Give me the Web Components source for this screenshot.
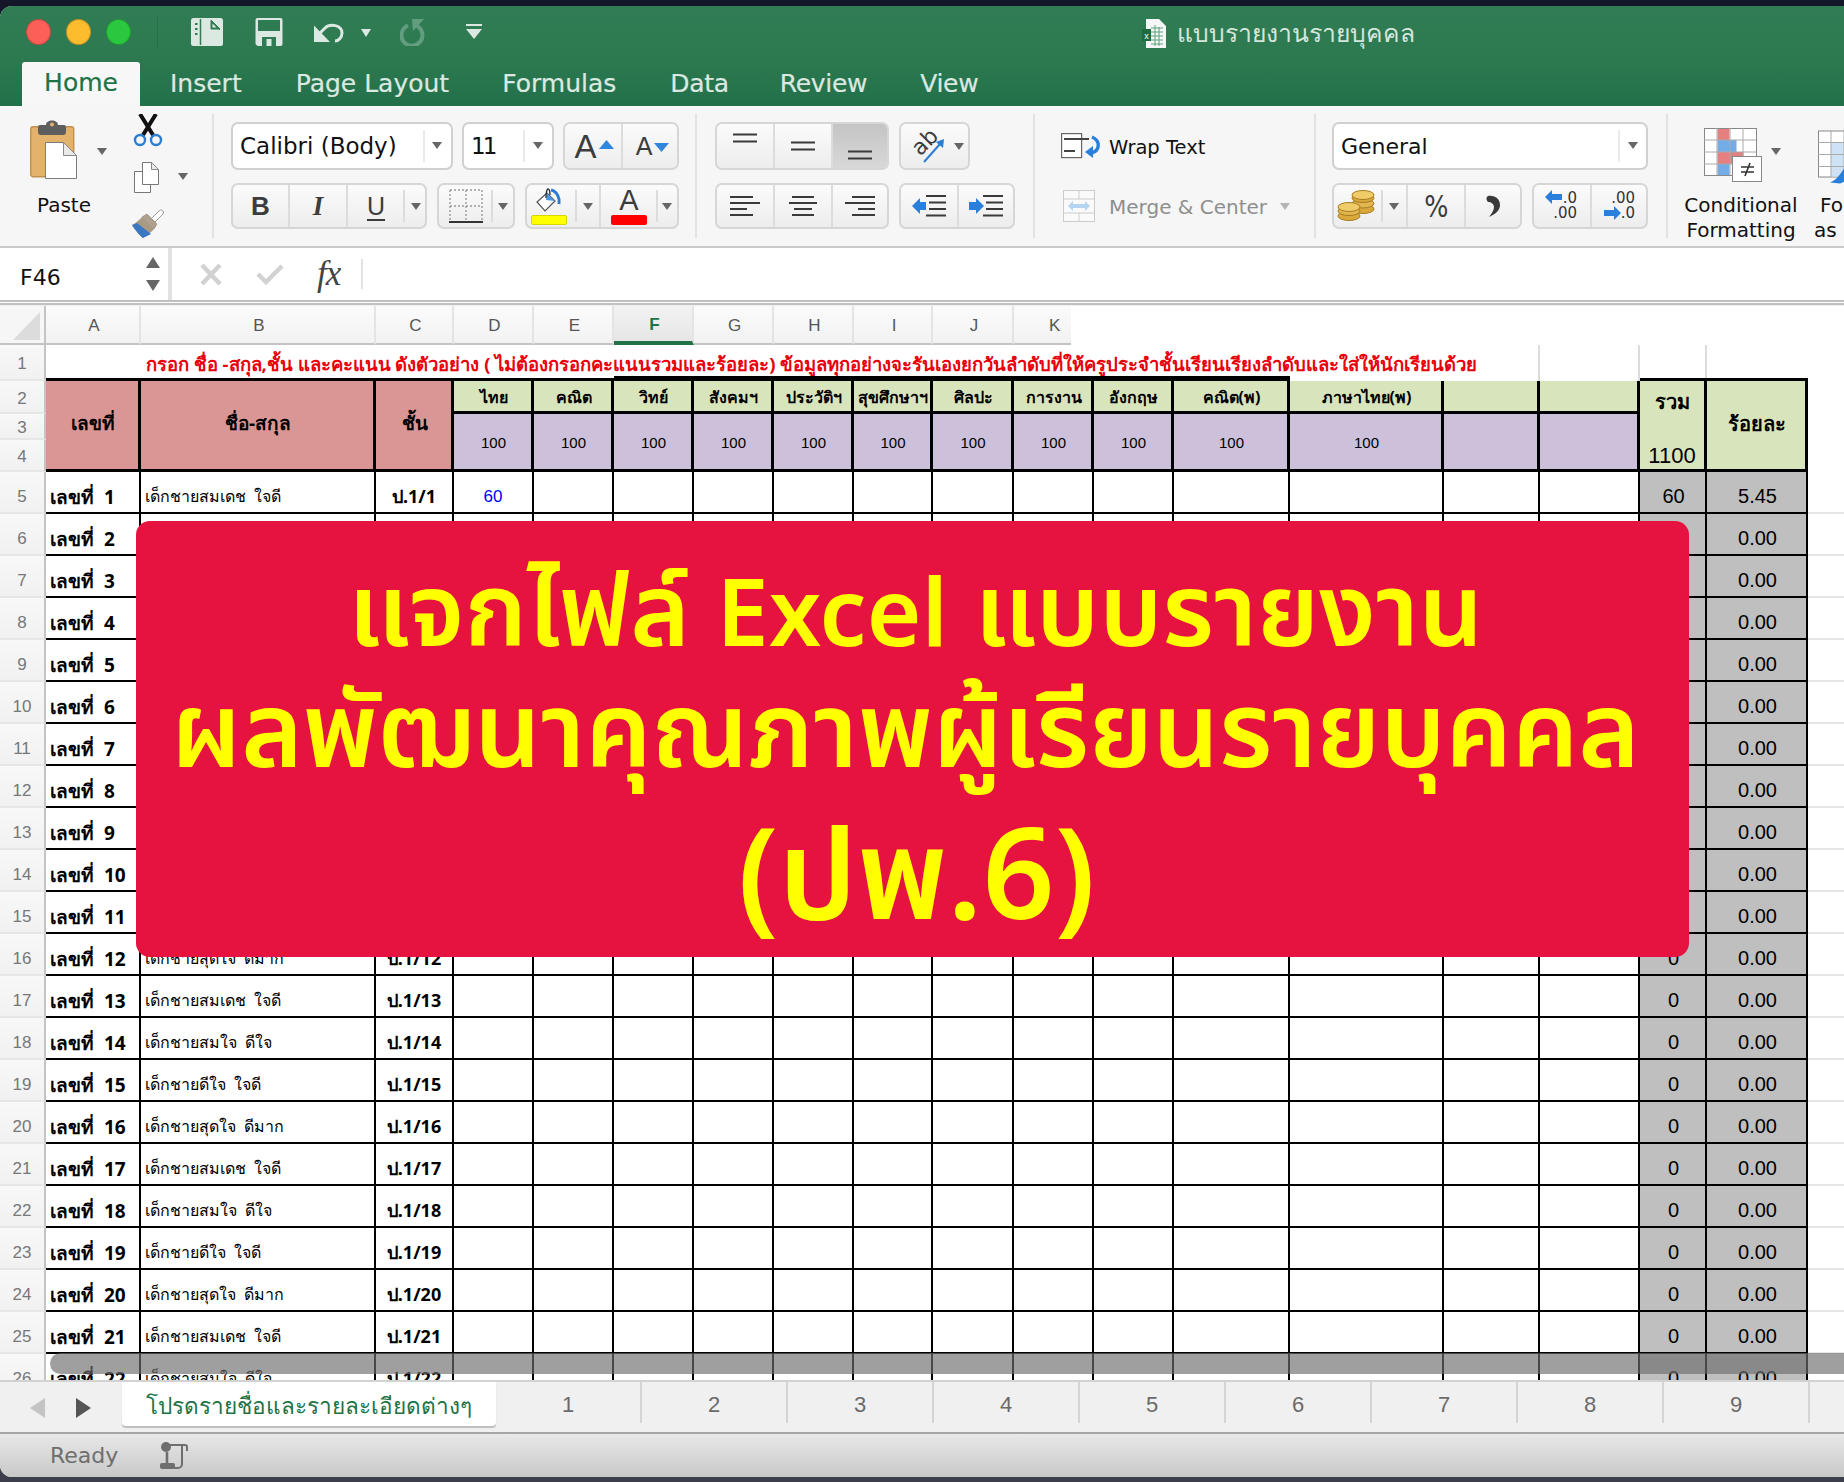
<!DOCTYPE html>
<html lang="th">
<head>
<meta charset="UTF-8" />
<title>แบบรายงานรายบุคคล</title>
<style>
  html, body { margin: 0; padding: 0; background: #14162a; }
  body { width: 1844px; height: 1482px; overflow: hidden; font-family: "DejaVu Sans", sans-serif; }
</style>
</head>
<body>
<xl-app>
  <xl-titlebar></xl-titlebar>
  <xl-tabs></xl-tabs>
  <xl-ribbon></xl-ribbon>
  <xl-formula></xl-formula>
  <xl-sheet></xl-sheet>
  <xl-sheettabs></xl-sheettabs>
  <xl-status></xl-status>
  <xl-banner slot="over">
    <span style="font-size:101.5px;margin-left:6px">แจกไฟล์ <span style="font-size:94px">Excel</span> แบบรายงาน</span>
    <span style="font-size:104.6px;margin:-4px 14px 0 0">ผลพัฒนาคุณภาพผู้เรียนรายบุคคล</span>
    <span style="font-size:126px;line-height:153px;margin:8px 0 0 8px">(ปพ.6)</span>
  </xl-banner>
</xl-app>

<script>
  const THAI = '"Noto Sans", sans-serif';
  const define = (name, css, html) => {
    customElements.define(name, class extends HTMLElement {
      constructor() {
        super();
        this.attachShadow({ mode: "open" }).innerHTML = `<style>${css}</style>${typeof html === "function" ? html() : html}`;
      }
    });
  };

  // Window frame
  define("xl-app", `
    :host { display: flex; flex-direction: column; position: relative; width: 1844px; height: 1482px; overflow: hidden; padding: 6px 0 5px; box-sizing: border-box; background: linear-gradient(#14162a 50%, #3c3e4c 50%); }
    .win { display: flex; flex-direction: column; flex: 1; border-radius: 12px 0 0 12px; overflow: hidden; background: #f0f0f0; }
  `, `<div class="win"><slot></slot></div><slot name="over"></slot>`);

  // Title bar
  const ACTIVE = "#dce9e2";
  define("xl-titlebar", `
    :host { display: flex; align-items: flex-start; height: 56px; box-sizing: border-box; background: linear-gradient(#317c54, #2c7950); color: #dce9e2; }
    .lights { display: flex; gap: 15px; margin: 13px 0 0 26px; }
    .lights i { width: 25px; height: 26px; border-radius: 50%; box-sizing: border-box; border: 1px solid rgba(0,0,0,.22); }
    .sep { width: 1px; height: 32px; margin: 10px 33px 0 26px; background: rgba(0,0,0,.1); }
    svg { display: block; flex: none; }
    .title { display: flex; align-items: center; gap: 10px; position: absolute; left: 1142px; top: 14px; font: 24.7px "Noto Sans", sans-serif; color: #d6e6dd; }
  `, `
    <div class="lights"><i style="background:#fb5f57"></i><i style="background:#fdbb2e"></i><i style="background:#29c83f"></i></div>
    <div class="sep"></div>
    <svg width="32" height="28" viewBox="0 0 32 28" style="margin-top:12px"><rect width="32" height="28" rx="2.5" fill="${ACTIVE}"/><path d="M9.5 1v26" stroke="#2f7b53" stroke-width="1.5"/><path d="M4 6h2.5M4 11h2.5M4 16h2.5" stroke="#2f7b53" stroke-width="2"/><path d="M20 2v9h9zM20 3l9 9" fill="#2f7b53" stroke="#2f7b53" stroke-width="1"/><path d="M21.5 5.5v4h4z" fill="${ACTIVE}"/></svg>
    <svg width="28" height="28" viewBox="0 0 28 28" style="margin:12px 0 0 32px"><path d="M2.5 0h23a2 2 0 0 1 2 2v24a2 2 0 0 1-2 2H2.5l-2-2V2a2 2 0 0 1 2-2z" fill="${ACTIVE}"/><rect x="3" y="2" width="22" height="11" fill="#2f7b53"/><path d="M7 28v-9h14v9z" fill="#2f7b53"/><rect x="11.5" y="21" width="5" height="7" fill="${ACTIVE}"/></svg>
    <svg width="30" height="22" viewBox="0 0 30 22" style="margin:16px 0 0 31px"><path d="M0 3.5V20h16z" fill="${ACTIVE}"/><path d="M5 12l6-6c5-5 17-3 17 5 0 5-4 8-7 8" fill="none" stroke="${ACTIVE}" stroke-width="3"/></svg>
    <svg width="10" height="8" viewBox="0 0 10 8" style="margin:23px 0 0 17px"><path d="M0 0h10L5 8z" fill="${ACTIVE}"/></svg>
    <svg width="25" height="27" viewBox="0 0 25 27" style="margin:13px 0 0 29px"><path d="M8 6.5a10.5 10.5 0 1 0 9 .5" fill="none" stroke="#639d7f" stroke-width="4"/><path d="M12 0h12L13 12z" fill="#639d7f"/></svg>
    <svg width="16" height="15" viewBox="0 0 16 15" style="margin:18px 0 0 41px"><path d="M0 1h16" stroke="${ACTIVE}" stroke-width="2"/><path d="M0 5h16l-8 10z" fill="${ACTIVE}"/></svg>
    <div class="title">
      <svg width="25" height="29" viewBox="0 0 25 29"><path d="M4 0h13l7 7v22H4z" fill="#f4f7f5"/><path d="M9 9h12M9 13h12M9 17h12M9 21h12M9 25h12M13 6v21M17 8v19" stroke="#5fa27e" stroke-width="1"/><rect y="10" width="9" height="12" fill="#1f6b41"/><text x="4.5" y="19.5" font-size="9" text-anchor="middle" fill="#fff" font-family="Liberation Sans">x</text></svg>
      <span>แบบรายงานรายบุคคล</span>
    </div>
  `);

  // Ribbon tab names
  define("xl-tabs", `
    :host { display: flex; align-items: flex-end; gap: 54px; height: 44px; padding-left: 22px; background: linear-gradient(#2c7950, #22704a); font: 25px "DejaVu Sans", sans-serif; color: #dbe9e1; }
    span { height: 42px; line-height: 39px; display: block; white-space: nowrap; -webkit-text-stroke: .2px currentColor; }
    .on { background: #f7f7f7; color: #217346; width: 118px; height: 44px; line-height: 41px; text-align: center; border-radius: 3px 3px 0 0; margin-right: -24px; }
    .tight { letter-spacing: -.3px; }
  `, `<span class="on">Home</span><span>Insert</span><span>Page Layout</span><span style="margin-left:-1px">Formulas</span><span class="tight">Data</span><span class="tight" style="margin-left:-3px">Review</span><span class="tight" style="margin-left:-1px">View</span>`);

  // Ribbon button group and its segments
  define("rb-group", `
    :host { display: inline-flex; align-items: stretch; box-sizing: border-box; height: 46px; border: 2px solid #d6d6d6; border-radius: 7px; background: linear-gradient(#fbfbfb, #ededed); overflow: hidden; flex: none; }
  `, `<slot></slot>`);
  define("rb-seg", `
    :host { display: flex; align-items: center; justify-content: center; box-sizing: border-box; flex: none; position: relative; color: #3c3c3c; }
    :host([line]) { border-right: 2px solid #dcdcdc; }
    :host([on]) { background: linear-gradient(#c4c4c4, #d8d8d8); }
    :host([tick])::before { content: ""; position: absolute; left: -1px; top: 5px; bottom: 5px; width: 2px; background: #dcdcdc; }
  `, `<slot></slot>`);

  const caret = `<i class="c"></i>`;
  const hl = (ys, xs) => ys.map((y, i) => `<path d="M${xs ? xs[i][0] : 0} ${y}H${xs ? xs[i][1] : 24}" stroke="#3a3a3a" stroke-width="2.2"/>`).join("");

  define("xl-ribbon", `
    :host { display: flex; height: 142px; box-sizing: border-box; padding: 8px 0 8px; background: #f6f6f6; border-bottom: 2px solid #cacaca; overflow: hidden; font: 20px "DejaVu Sans", sans-serif; color: #111; }
    section { box-sizing: border-box; height: 124px; padding-top: 8px; border-right: 2px solid #e2e2e2; flex: none; display: flex; flex-direction: column; gap: 13px; }
    .row { display: flex; gap: 10px; align-items: center; height: 46px; flex: none; }
    .row.first { height: 48px; }
    .box { display: flex; align-items: center; box-sizing: border-box; height: 48px; border: 2px solid #d0d0d0; border-radius: 7px; background: #fff; font-size: 23px; position: relative; flex: none; color: #111; }
    .box span { padding-left: 7px; white-space: nowrap; }
    .box::after { content: ""; position: absolute; top: 6px; bottom: 6px; width: 2px; background: #eaeaea; right: var(--dv); }
    .box .c { position: absolute; right: var(--cr); top: 18px; }
    .c { display: block; flex: none; width: 0; height: 0; border: 5px solid transparent; border-top: 7px solid #666; border-bottom: 0; }
    svg { display: block; flex: none; }
    .clip { flex-direction: row; gap: 0; padding: 0; width: 214px; position: relative; }
    .paste { width: 102px; margin-left: 30px; display: flex; flex-direction: column; flex: none; height: 124px; }
    .paste .top { display: flex; padding-top: 6px; height: 60px; }
    .paste .top .c { margin: 28px 0 0 19px; }
    .paste b { font-weight: 400; margin: 13px 0 0 7px; line-height: 24px; color: #111; }
    .tools { display: flex; flex-direction: column; height: 124px; }
    .tools svg { margin-left: 1px; }
    .tools .cp { display: flex; margin: 15px 0 15px; }
    .tools .cp .c { margin: 11px 0 0 17px; }
    .b { font: bold 26px "Liberation Sans", sans-serif; }
    .i { font: italic bold 27px "Liberation Serif", serif; }
    .u { font: 25px "Liberation Sans", sans-serif; text-decoration: underline; text-underline-offset: 4px; text-decoration-thickness: 2px; }
    .ga { font-family: "Liberation Sans", sans-serif; color: #3c3c3c; line-height: 1; }
    .wrapcol { padding-left: 26px; width: 281px; }
    .wraprow { display: flex; align-items: center; gap: 8px; height: 48px; white-space: nowrap; }
    .wraprow span, .mergerow span { padding-top: 2px; }
    .mergerow { display: flex; align-items: center; height: 46px; white-space: nowrap; color: #8e8e8e; }
    .mergerow .c { border-top-color: #b5b5b5; margin-left: 13px; }
    .dec { font: 15px/15px "DejaVu Sans", sans-serif; color: #333; position: relative; width: 56px; height: 30px; flex: none; }
    .dec span { position: absolute; }
    .dec svg { position: absolute; }
    .styles { border: 0; flex-direction: row; gap: 0; padding: 14px 0 0 0; position: relative; flex: 1; }
    .cf { width: 146px; flex: none; }
    .cf .ic { display: flex; padding-left: 36px; height: 65px; }
    .cf .ic .c { margin: 20px 0 0 9px; }
    .lab { line-height: 25px; white-space: nowrap; margin-top: 0; }
    .cf .lab { text-align: center; }
    .next svg { margin: 1px 0 5px 4px; height: 59px; }
    .next { padding-left: 1px; margin-left: -1px; }
  `, `
    <section class="clip">
      <div class="paste">
        <div class="top">
          <svg width="48" height="60" viewBox="0 0 48 60">
            <rect x="0.7" y="6.7" width="43" height="50" rx="2.5" fill="#e3b26c" stroke="#c28f4c" stroke-width="1.4"/>
            <path d="M8 12V7a2 2 0 0 1 2-2h6c0-6 12-6 12 0h6a2 2 0 0 1 2 2v5a3 3 0 0 1-3 3H11a3 3 0 0 1-3-3z" fill="#5e5e5e"/>
            <circle cx="22" cy="4.5" r="2" fill="#e3b26c"/>
            <path d="M15.5 22.5h18l13 13v23h-31z" fill="#fff" stroke="#7d7d7d" stroke-width="1"/>
            <path d="M33.5 22.5v13h13z" fill="#e9e9e9" stroke="#8a8a8a" stroke-width="1"/>
          </svg>
          ${caret}
        </div>
        <b>Paste</b>
      </div>
      <div class="tools">
        <svg width="30" height="33" viewBox="0 0 30 33" style="margin-top:0">
          <path d="M7 0l13 21M23 0L10 21" stroke="#111" stroke-width="4"/>
          <circle cx="7" cy="26" r="5" fill="none" stroke="#2b7cd3" stroke-width="2.4"/><circle cx="23" cy="26" r="5" fill="none" stroke="#2b7cd3" stroke-width="2.4"/>
        </svg>
        <div class="cp">
          <svg width="28" height="31" viewBox="0 0 28 31">
            <path d="M1.5 9.5h16v21h-16z" fill="#fff" stroke="#777" stroke-width="1"/>
            <path d="M9.5 .5h9l7 7v15h-16z" fill="#fff" stroke="#777" stroke-width="1"/>
            <path d="M18.5 .5v7h7z" fill="#ececec" stroke="#888" stroke-width="1"/>
          </svg>
          ${caret}
        </div>
        <svg width="34" height="30" viewBox="0 0 34 30" style="margin-left:-1px">
          <path d="M20 11l8-8a2.5 2.5 0 0 1 4 3l-8 8z" fill="#fff" stroke="#9a9a9a" stroke-width="1"/>
          <path d="M11 9l5-3 10 10-3 5z" fill="#b0a18e" stroke="#8e8270" stroke-width=".6"/>
          <path d="M11 9l12 12c-3 4-9 7-11 9-2-1-8-8-11-13 3-1 7-5 10-8z" fill="#a99a86"/>
          <path d="M1 17l5-2 14 11-8 4c-2-1-8-8-11-13z" fill="#3a78c4"/>
        </svg>
      </div>
    </section>

    <section style="width:483px;padding-left:17px">
      <div class="row first" style="gap:9px">
        <div class="box" style="width:222px;--dv:26px;--cr:9px"><span>Calibri (Body)</span>${caret}</div>
        <div class="box" style="width:92px;--dv:27px;--cr:9px"><span style="letter-spacing:-3px;font-size:23px">11</span>${caret}</div>
        <rb-group style="width:116px;height:48px">
          <rb-seg line style="width:58px"><span class="ga" style="font-size:33px;margin-left:2px">A</span><svg width="15" height="9" viewBox="0 0 15 9" style="margin:-4px 0 0 2px"><path d="M0 9L7.5 0 15 9z" fill="#2f86dc"/></svg></rb-seg>
          <rb-seg style="width:56px"><span class="ga" style="font-size:25px;margin-left:3px">A</span><svg width="15" height="9" viewBox="0 0 15 9" style="margin:2px 0 0 2px"><path d="M0 0L7.5 9 15 0z" fill="#2f86dc"/></svg></rb-seg>
        </rb-group>
      </div>
      <div class="row">
        <rb-group style="width:196px">
          <rb-seg line style="width:57px"><span class="b">B</span></rb-seg>
          <rb-seg line style="width:58px"><span class="i">I</span></rb-seg>
          <rb-seg style="width:56px"><span class="u">U</span></rb-seg>
          <rb-seg tick style="width:23px">${caret}</rb-seg>
        </rb-group>
        <rb-group style="width:78px">
          <rb-seg style="width:53px">
            <svg width="34" height="34" viewBox="0 0 34 34"><path d="M1 1h32v32M1 1v32M17 1v32M1 17h32" fill="none" stroke="#9a9a9a" stroke-width="1.4" stroke-dasharray="2 2"/><path d="M0 33h34" stroke="#333" stroke-width="2"/></svg>
          </rb-seg>
          <rb-seg tick style="width:21px">${caret}</rb-seg>
        </rb-group>
        <rb-group style="width:154px">
          <rb-seg style="width:49px;flex-direction:column;padding-right:6px">
            <svg width="26" height="24" viewBox="0 0 26 24"><path d="M11 5L1 14l8 9 10-10z" fill="#fff" stroke="#555" stroke-width="1.2"/><path d="M11 5l8 8-9-1z" fill="#4b94df"/><path d="M10 10c0-3 0-8 2-9 2 0 2 4 2 6" fill="none" stroke="#333" stroke-width="1.4"/><path d="M15 2c6 1 9 8 8 14" fill="none" stroke="#2b7cd3" stroke-width="3"/></svg>
            <i style="display:block;width:36px;height:10px;margin-top:3px;background:#ff0;border:1px solid #d6d600;box-sizing:border-box;border-radius:2px"></i>
          </rb-seg>
          <rb-seg tick line style="width:25px">${caret}</rb-seg>
          <rb-seg style="width:56px;flex-direction:column">
            <span class="ga" style="font-size:29px;line-height:24px;height:24px">A</span>
            <i style="display:block;width:36px;height:10px;margin-top:3px;background:#f00;border-radius:2px"></i>
          </rb-seg>
          <rb-seg tick style="width:20px">${caret}</rb-seg>
        </rb-group>
      </div>
    </section>

    <section style="width:338px;padding-left:18px">
      <div class="row first">
        <rb-group style="width:174px;height:48px">
          <rb-seg line style="width:58px;align-items:flex-start;padding-top:9px"><svg width="24" height="10" viewBox="0 0 24 10">${hl([1.5, 8.5])}</svg></rb-seg>
          <rb-seg line style="width:58px"><svg width="24" height="10" viewBox="0 0 24 10">${hl([1.5, 8.5])}</svg></rb-seg>
          <rb-seg on style="width:54px;align-items:flex-end;padding-bottom:8px"><svg width="24" height="10" viewBox="0 0 24 10">${hl([1.5, 8.5])}</svg></rb-seg>
        </rb-group>
        <rb-group style="width:71px;height:48px">
          <rb-seg style="width:67px;gap:5px;padding-left:3px">
            <svg width="40" height="36" viewBox="0 0 40 36"><text x="16" y="21" font-size="22" text-anchor="middle" font-family="DejaVu Sans" fill="#3c3c3c" transform="rotate(-45 16 14)">ab</text><path d="M15 34L31 16" stroke="#2b7cd3" stroke-width="2"/><path d="M35 11l-1 9-7-6z" fill="#2b7cd3"/></svg>
            ${caret}
          </rb-seg>
        </rb-group>
      </div>
      <div class="row">
        <rb-group style="width:174px">
          <rb-seg line style="width:58px"><svg width="30" height="20" viewBox="0 0 30 20">${hl([1, 7, 13, 19], [[0, 23], [0, 30], [0, 17], [0, 23]])}</svg></rb-seg>
          <rb-seg line style="width:58px"><svg width="28" height="20" viewBox="0 0 28 20">${hl([1, 7, 13, 19], [[3, 25], [0, 28], [5, 23], [3, 25]])}</svg></rb-seg>
          <rb-seg style="width:54px"><svg width="30" height="20" viewBox="0 0 30 20">${hl([1, 7, 13, 19], [[7, 30], [0, 30], [13, 30], [7, 30]])}</svg></rb-seg>
        </rb-group>
        <rb-group style="width:116px">
          <rb-seg line style="width:58px"><svg width="34" height="22" viewBox="0 0 34 22">${hl([1, 7.5, 14, 20.5], [[14, 34], [17, 34], [17, 34], [14, 34]])}<path d="M0 11l8-8v4h6v8H8v4z" fill="#2b7fdc"/></svg></rb-seg>
          <rb-seg style="width:54px"><svg width="34" height="22" viewBox="0 0 34 22">${hl([1, 7.5, 14, 20.5], [[14, 34], [17, 34], [17, 34], [14, 34]])}<path d="M15 11l-8-8v4H0v8h7v4z" fill="#2b7fdc"/></svg></rb-seg>
        </rb-group>
      </div>
    </section>

    <section class="wrapcol">
      <div class="wraprow" style="font-size:19.5px">
        <svg width="40" height="26" viewBox="0 0 40 26"><rect x=".6" y=".6" width="20" height="24" fill="#fff" stroke="#666" stroke-width="1.2"/><path d="M3 6h25M3 18h11" stroke="#444" stroke-width="2"/><path d="M31 4c9 4 8 14-1 16" fill="none" stroke="#2b7fdc" stroke-width="3.4"/><path d="M24 19l8-6v12z" fill="#2b7fdc"/></svg>
        <span>Wrap Text</span>
      </div>
      <div class="mergerow">
        <svg width="32" height="32" viewBox="0 0 32 32" style="margin:0 14px 0 2px"><rect x=".5" y=".5" width="31" height="31" fill="#fafafa" stroke="#ccc"/><path d="M0 9h32M0 23h32M16 0v9M16 23v9" stroke="#ccc"/><path d="M5 16l5-5v3h12v-3l5 5-5 5v-3H10v3z" fill="#b5d4f2"/></svg>
        <span>Merge &amp; Center</span>${caret}
      </div>
    </section>

    <section style="width:352px;padding-left:16px">
      <div class="row first"><div class="box" style="width:316px;--dv:26px;--cr:8px;font-size:22px"><span>General</span>${caret}</div></div>
      <div class="row">
        <rb-group style="width:190px">
          <rb-seg style="width:48px;justify-content:flex-start;padding-left:3px">
            <svg width="38" height="32" viewBox="0 0 38 32">
              <g stroke="#a67c22" stroke-width="1">
              <ellipse cx="26" cy="19" rx="11" ry="4.5" fill="#d9a93c"/><ellipse cx="26" cy="13.5" rx="11" ry="4.5" fill="#e2b64c"/><ellipse cx="26" cy="8" rx="11" ry="4.5" fill="#d9a93c"/><ellipse cx="26" cy="5" rx="11" ry="4.5" fill="#f0cc68"/>
              <ellipse cx="12" cy="26" rx="11" ry="4.5" fill="#d9a93c"/><ellipse cx="12" cy="21" rx="11" ry="4.5" fill="#e2b64c"/><ellipse cx="12" cy="17" rx="11" ry="4.5" fill="#f0cc68"/></g>
            </svg>
          </rb-seg>
          <rb-seg tick line style="width:26px">${caret}</rb-seg>
          <rb-seg line style="width:58px"><span style="font:30px 'DejaVu Sans',sans-serif;color:#3c3c3c;transform:scaleX(.85)">%</span></rb-seg>
          <rb-seg style="width:54px"><svg width="14" height="22" viewBox="0 0 14 22"><path d="M2 1C9 0 14 4 14 10c0 5-4 9-11 12 3-4 5-7 5-10 0-3-3-5-6-5C0 5 0 2 2 1z" fill="#3a3a3a"/></svg></rb-seg>
        </rb-group>
        <rb-group style="width:116px">
          <rb-seg line style="width:58px"><div class="dec">
            <svg width="18" height="14" viewBox="0 0 18 14" style="left:11px;top:-1px"><path d="M0 7l7-7v4h10v6H7v4z" fill="#2b7fdc"/></svg>
            <span style="right:13px;top:0">.0</span><span style="right:13px;top:15px">.00</span></div></rb-seg>
          <rb-seg style="width:54px"><div class="dec">
            <span style="right:12px;top:0">.00</span>
            <svg width="18" height="14" viewBox="0 0 18 14" style="left:12px;top:15px"><path d="M18 7l-7-7v4H1v6h10v4z" fill="#2b7fdc"/></svg>
            <span style="right:12px;top:15px">.0</span></div></rb-seg>
        </rb-group>
      </div>
    </section>

    <section class="styles">
      <div class="cf">
        <div class="ic">
          <svg width="58" height="54" viewBox="0 0 58 54">
            <rect x=".5" y=".5" width="52" height="47" fill="#fff" stroke="#888"/>
            <rect x="13.5" y="1" width="12" height="11" fill="#e77f80"/><rect x="13.5" y="12" width="19" height="12" fill="#73ade8"/><rect x="13.5" y="24" width="26" height="12" fill="#e77f80"/><rect x="13.5" y="36" width="12" height="11" fill="#73ade8"/>
            <path d="M13 0v47M26 0v47M39 0v47M0 12h52M0 24h52M0 36h52" stroke="#aaa" stroke-width="1" fill="none"/>
            <rect x="28.5" y="28.5" width="29" height="25" fill="#fff" stroke="#888"/>
            <path d="M37 39h13M37 44h13M46 35l-5 13" stroke="#333" stroke-width="1.6"/>
          </svg>
          ${caret}
        </div>
        <div class="lab">Conditional<br>Formatting</div>
      </div>
      <div class="next">
        <svg width="40" height="56" viewBox="0 0 40 56"><rect x=".5" y=".5" width="39" height="46" fill="#fff" stroke="#888"/><rect x="13" y="12" width="27" height="34" fill="#cfe2f5"/><path d="M13 0v47M26 0v47M0 12h40M0 24h40M0 36h40" stroke="#aaa"/><path d="M12 52c6-2 10-8 14-14l6 6c-2 4-6 8-10 9z" fill="#2b7fdc"/></svg>
        <div class="lab"><span style="margin-left:6px">Fo</span><br>as</div>
      </div>
    </section>
  `);

  // Formula bar
  define("xl-formula", `
    :host { display: flex; height: 57px; margin-bottom: 1px; box-sizing: border-box; background: #fff; border-bottom: 5px double #c0c0c0; flex: none; }
    .name { display: flex; align-items: center; box-sizing: border-box; padding-left: 20px; font: 22px "DejaVu Sans", sans-serif; color: #111; position: relative; border-right: 4px solid #e2e2e2; width: 172px; }
    .name > span { padding-top: 6px; }
    .step { margin-left: auto; margin-right: 8px; display: flex; flex-direction: column; gap: 12px; }
    .icons { display: flex; align-items: center; padding-left: 28px; gap: 34px; }
    .fx { font: italic 35px "Liberation Serif", serif; color: #444; letter-spacing: -1px; margin-left: -1px; }
    .line { width: 2px; height: 30px; background: #e4e4e4; margin-left: -13px; }
    svg { display: block; }
  `, `
    <div class="name"><span>F46</span><div class="step">
      <svg width="14" height="11" viewBox="0 0 14 11"><path d="M7 0l7 11H0z" fill="#666"/></svg>
      <svg width="14" height="11" viewBox="0 0 14 11"><path d="M0 0h14L7 11z" fill="#666"/></svg>
    </div></div>
    <div class="icons">
      <svg width="22" height="21" viewBox="0 0 22 21"><path d="M2 1l18 19M20 1L2 20" stroke="#d2d2d2" stroke-width="4.5"/></svg>
      <svg width="28" height="21" viewBox="0 0 28 21"><path d="M2 10l8 8L26 2" fill="none" stroke="#d2d2d2" stroke-width="4.5"/></svg>
      <span class="fx">fx</span>
      <i class="line"></i>
    </div>
  `);

  // Sheet: one grid, row numbers and column letters included
  const tracks = [46, 95, 235, 78, 80, 80, 80, 80, 80, 79, 81, 80, 80, 116, 154, 96, 100, 67, 101, 36];
  const people = ["เด็กชายสุดใจ  ดีมาก", "เด็กชายสมเดช  ใจดี", "เด็กชายสมใจ  ดีใจ", "เด็กชายดีใจ  ใจดี"];
  const subjects = ["ไทย", "คณิต", "วิทย์", "สังคมฯ", "ประวัติฯ", "สุขศึกษาฯ", "ศิลปะ", "การงาน", "อังกฤษ", "คณิต(พ)", "ภาษาไทย(พ)", "", ""];

  define("xl-sheet", `
    :host { display: block; flex: none; height: 1074px; overflow: hidden; position: relative; background: #fff; }
    .grid { display: grid; grid-template-columns: ${tracks.map(t => t + "px").join(" ")}; grid-template-rows: 39px 36px 33px 26px 32px repeat(22, 42px); }
    .grid > div { box-sizing: border-box; display: flex; align-items: center; justify-content: center; min-width: 0; white-space: pre; font: 17px ${THAI}; color: #000; }
    .col { background: linear-gradient(#fbfbfb, #f2f2f2); border-right: 2px solid #e4e4e4; border-bottom: 2px solid #c4c4c4; padding: 3px 0 0 3px; font: 17px "Liberation Sans", sans-serif !important; color: #555 !important; }
    .col.last { justify-content: flex-start; padding-left: 35px; border-right: 0; margin-right: 23px; }
    .col.cur { background: linear-gradient(#f2f2f2, #e6e6e6); border-bottom: 4px solid #217346; color: #217346 !important; font-weight: 700 !important; }
    .corner { background: #f6f6f6; border-right: 2px solid #c4c4c4; border-bottom: 2px solid #c4c4c4; padding: 0 0 3px 13px; align-items: flex-end !important; justify-content: flex-start !important; }
    .num { background: linear-gradient(#f8f8f8, #f1f1f1); border-right: 2px solid #c4c4c4; border-bottom: 2px solid #e6e6e6; padding-top: 4px; font: 17px "Liberation Sans", sans-serif !important; color: #777 !important; }
    .rule { background: #000; align-self: end; height: 3px; z-index: 1; }
    .rule.thick { height: 5px; }
    .note { justify-content: flex-start !important; padding: 2px 0 0 5px; grid-column: 3 / 16; color: #e8000b !important; font-weight: 700 !important; font-size: 18.5px !important; overflow: visible; }
    .faint { border-right: 2px solid #dcdcdc; }
    .pink { background: #d99694; border-right: 3px solid #000; border-bottom: 3px solid #000; padding: 0 0 4px 2px; font-weight: 700 !important; font-size: 19px !important; }
    .green { background: #d8e4bc; border-right: 3px solid #000; border-bottom: 3px solid #000; padding: 2px 0 0 2px; font-weight: 700 !important; font-size: 16px !important; }
    .purple { background: #ccc0da; border-right: 3px solid #000; border-bottom: 3px solid #000; padding: 2px 0 0 2px; font: 15px "Liberation Sans", sans-serif !important; }
    .total { flex-direction: column; justify-content: space-between !important; padding: 5px 0 0; font-size: 20px !important; }
    .total span:last-child { font: 22px "Liberation Sans", sans-serif; }
    .pct { padding-bottom: 4px; font-size: 20px !important; }
    .c { border-right: 2px solid #000; border-bottom: 2px solid #000; padding-top: 9px; }
    .id { justify-content: flex-start !important; padding-left: 4px; font-weight: 700 !important; font-size: 19px !important; }
    .nm { justify-content: flex-start !important; padding-left: 4px; font-size: 16px !important; }
    .cls { font-weight: 700 !important; font-size: 18px !important; }
    .blue { color: #0000ff !important; font: 17px "Liberation Sans", sans-serif !important; }
    .gray { background: #bfbfbf; padding-left: 2px; font: 20px "Liberation Sans", sans-serif !important; }
    .end { border-bottom: 2px solid #e6e6e6; }
    .dr { padding-top: 9px; }
    .bar { position: absolute; left: 50px; right: 0; top: 1047px; height: 21px; border-radius: 11px 0 0 11px; background: rgba(110,110,110,.66); z-index: 2; }
  `, () => {
    const cell = (cls, text = "", style = "") => `<div class="${cls}"${style ? ` style="${style}"` : ""}>${text}</div>`;
    let h = `<div class="bar"></div><div class="grid">`;
    // column letters
    h += cell("corner", `<svg width="27" height="28" viewBox="0 0 27 28"><path d="M27 0v28H0z" fill="#dcdcdc"/></svg>`);
    "ABCDEFGHIJK".split("").forEach(l => {
      h += cell("col" + (l === "F" ? " cur" : "") + (l === "K" ? " last" : ""), l);
    });
    // row 1
    h += cell("num", "1", "grid-row:2");
    h += cell("", "", "grid-row:2;grid-column:2");
    h += cell("note", "กรอก ชื่อ -สกุล,ชั้น และคะแนน ดังตัวอย่าง ( ไม่ต้องกรอกคะแนนรวมและร้อยละ) ข้อมูลทุกอย่างจะรันเองยกวันลำดับที่ให้ครูประจำชั้นเรียนเรียงลำดับและใส่ให้นักเรียนด้วย", "grid-row:2");
    h += cell("faint", "", "grid-row:2;grid-column:16");
    h += cell("faint", "", "grid-row:2;grid-column:17");
    h += cell("faint", "", "grid-row:2;grid-column:18");
    h += cell("rule", "", "grid-row:2;grid-column:2 / 7");
    h += cell("rule thick", "", "grid-row:2;grid-column:7 / 15");
    h += cell("rule", "", "grid-row:2;grid-column:18 / 20");
    // header rows 2-4
    ["2", "3", "4"].forEach((n, i) => { h += cell("num", n, `grid-row:${3 + i};grid-column:1`); });
    h += cell("pink", "เลขที่", "grid-row:3 / 6;grid-column:2");
    h += cell("pink", "ชื่อ-สกุล", "grid-row:3 / 6;grid-column:3");
    h += cell("pink", "ชั้น", "grid-row:3 / 6;grid-column:4");
    subjects.forEach((s, i) => {
      h += cell("green", s, `grid-row:3;grid-column:${5 + i}`);
      h += cell("purple", i < 11 ? "100" : "", `grid-row:4 / 6;grid-column:${5 + i}`);
    });
    h += cell("green total", "<span>รวม</span><span>1100</span>", "grid-row:3 / 6;grid-column:18");
    h += cell("green pct", "ร้อยละ", "grid-row:3 / 6;grid-column:19");
    // data rows 5-26, rows under the banner keep only what shows beside it
    for (let r = 5; r <= 26; r++) {
      const n = r - 4, y = r + 1, hidden = n >= 2 && n <= 11;
      h += cell("num dr", r, `grid-row:${y};grid-column:1`);
      h += cell("c id", `เลขที่  ${n}`, `grid-row:${y};grid-column:2`);
      h += cell("c nm", hidden ? "" : people[n % 4], `grid-row:${y};grid-column:3`);
      h += cell("c cls", hidden ? "" : `ป.1/${n}`, `grid-row:${y};grid-column:4`);
      for (let c = 5; c <= 17; c++) {
        h += cell(c === 5 && n === 1 ? "c blue" : "c", c === 5 && n === 1 ? "60" : "", `grid-row:${y};grid-column:${c}`);
      }
      h += cell("c gray", hidden ? "" : n === 1 ? "60" : "0", `grid-row:${y};grid-column:18`);
      h += cell("c gray", n === 1 ? "5.45" : "0.00", `grid-row:${y};grid-column:19`);
      h += cell("end", "", `grid-row:${y};grid-column:20`);
    }
    return h + `</div>`;
  });

  // Sheet tabs
  define("xl-sheettabs", `
    :host { display: flex; align-items: flex-start; height: 54px; box-sizing: border-box; flex: none; background: #f0f0f0; border-top: 2px solid #d2d2d2; border-bottom: 2px solid #a6a6a6; font: 22px "Liberation Sans", sans-serif; color: #6a6a6a; }
    .nav { display: flex; gap: 31px; width: 122px; box-sizing: border-box; padding: 16px 0 0 30px; flex: none; }
    svg { display: block; }
    .on { width: 374px; box-sizing: border-box; height: 44px; padding-top: 3px; background: #fff; border-radius: 0 0 4px 4px; box-shadow: 0 2px 1px #bdbdbd; display: flex; align-items: center; justify-content: center; font: 500 22.6px ${THAI}; color: #217346; white-space: nowrap; flex: none; }
    .t { width: 146px; height: 41px; flex: none; box-sizing: border-box; border-right: 2px solid #d4d4d4; display: flex; align-items: center; justify-content: center; padding-top: 5px; }
  `, () => `
    <div class="nav">
      <svg width="15" height="20" viewBox="0 0 15 20"><path d="M15 0v20L0 10z" fill="#c4c4c4"/></svg>
      <svg width="15" height="20" viewBox="0 0 15 20"><path d="M0 0v20l15-10z" fill="#555"/></svg>
    </div>
    <div class="on">โปรดรายชื่อและรายละเอียดต่างๆ</div>
    ${[1, 2, 3, 4, 5, 6, 7, 8, 9].map(n => `<div class="t">${n}</div>`).join("")}
  `);

  // Status bar
  define("xl-status", `
    :host { display: flex; align-items: center; flex: 1; gap: 41px; padding-left: 50px; background: linear-gradient(#e8e8e8, #c8c8c8); font: 22px "DejaVu Sans", sans-serif; color: #6e6e6e; }
    svg { display: block; }
  `, `
    <span>Ready</span>
    <svg width="30" height="28" viewBox="0 0 30 28"><circle cx="7" cy="5" r="5" fill="#6e6e6e"/><path d="M10 3h16a2 2 0 0 1 2 2v4M23 3v19a4 4 0 0 1-4 4h-4" fill="none" stroke="#6e6e6e" stroke-width="2"/><path d="M8 10v11" stroke="#6e6e6e" stroke-width="2.6"/><rect x="1" y="21" width="15" height="6" rx="2" fill="#6e6e6e"/></svg>
  `);

  // Headline banner over the sheet
  define("xl-banner", `
    :host { position: absolute; left: 136px; top: 521px; width: 1553px; height: 436px; box-sizing: border-box; padding-top: 33px; display: flex; flex-direction: column; align-items: center; background: #e6123f; border-radius: 14px; color: #ffff00; font: 600 88px/122px "Noto Sans Thai", "Noto Sans", sans-serif; white-space: nowrap; z-index: 5; }
    ::slotted(span) { display: block; }
  `, `<slot></slot>`);
</script>
</body>
</html>
